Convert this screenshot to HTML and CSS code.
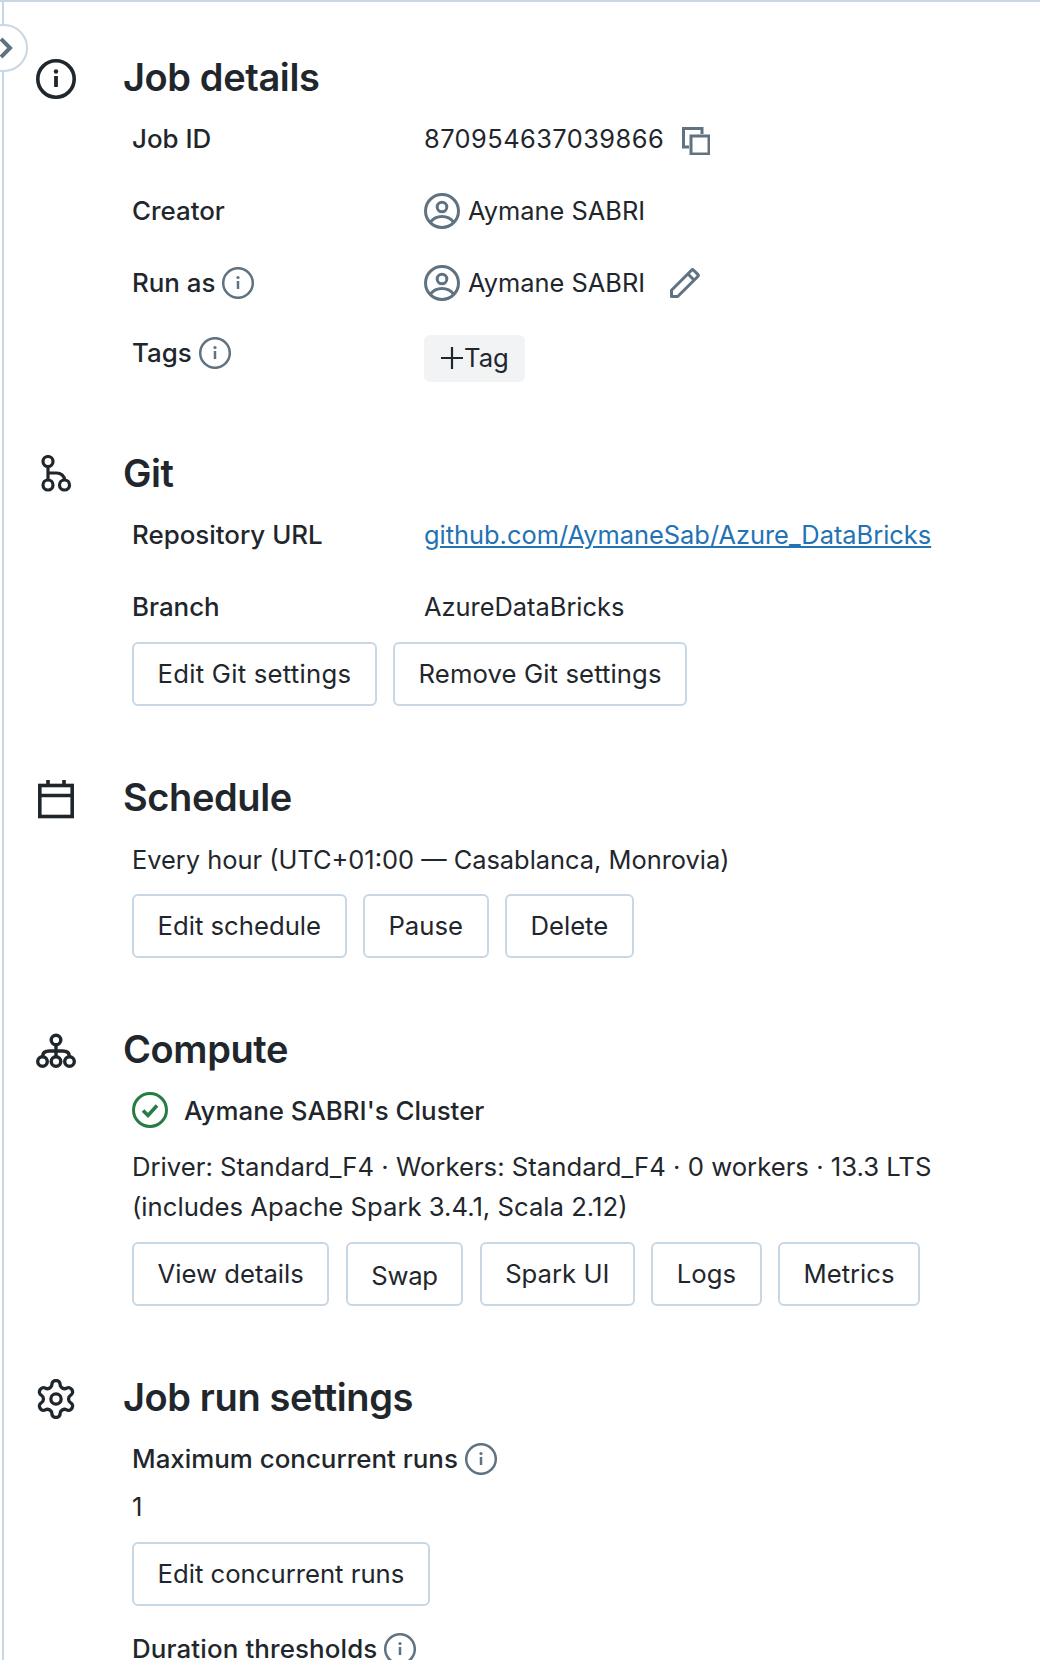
FILE: index.html
```html
<!DOCTYPE html>
<html lang="en">
<head>
  <meta charset="UTF-8">
  <title>Job details</title>
  <link rel="stylesheet" href="styles.css">
</head>
<body>

  <div class="panel">

    <button class="toggle" aria-label="Expand">
      <svg width="14" height="22" viewBox="0 0 14 22"><path d="M1 2l9 9-9 9" fill="none" stroke="#5f7281" stroke-width="4"/></svg>
    </button>

    <section class="section section-first">
      <div class="section-head">
        <svg class="head-icon" width="40" height="40" viewBox="0 0 40 40"><circle cx="20" cy="20" r="18.2" fill="none" stroke="#1f272d" stroke-width="3.6"/><circle cx="20" cy="12.5" r="2.2" fill="#1f272d"/><path d="M20 17v11" stroke="#1f272d" stroke-width="3.8"/></svg>
        <h2>Job details</h2>
      </div>
      <div class="row">
        <div class="label">Job ID</div>
        <div class="value"><span class="job-id">870954637039866</span>
          <svg class="copy-icon" width="28" height="28" viewBox="0 0 28 28"><path d="M7 20H1.500V1.500H20V7" fill="none" stroke="#5f7281" stroke-width="3"/><rect x="9" y="9" width="18" height="18" fill="none" stroke="#5f7281" stroke-width="3"/></svg>
        </div>
      </div>
      <div class="row">
        <div class="label">Creator</div>
        <div class="value">
          <svg class="user-icon" width="36" height="36" viewBox="0 0 36 36"><circle cx="18" cy="18" r="16.500" fill="none" stroke="#5f7281" stroke-width="3"/><circle cx="18" cy="14" r="4.800" fill="none" stroke="#5f7281" stroke-width="3"/><path d="M6.500 29C9.500 25 13.500 23.500 18 23.500s8.500 1.500 11.500 5.500" fill="none" stroke="#5f7281" stroke-width="3"/></svg>
          Aymane SABRI
        </div>
      </div>
      <div class="row">
        <div class="label">Run as
          <svg class="info-icon" width="32" height="32" viewBox="0 0 32 32"><circle cx="16" cy="16" r="14.800" fill="none" stroke="#5f7281" stroke-width="2.500"/><circle cx="16" cy="10.500" r="1.600" fill="#5f7281"/><path d="M16 14v8" stroke="#5f7281" stroke-width="2.500"/></svg>
        </div>
        <div class="value">
          <svg class="user-icon" width="36" height="36" viewBox="0 0 36 36"><circle cx="18" cy="18" r="16.500" fill="none" stroke="#5f7281" stroke-width="3"/><circle cx="18" cy="14" r="4.800" fill="none" stroke="#5f7281" stroke-width="3"/><path d="M6.500 29C9.500 25 13.500 23.500 18 23.500s8.500 1.500 11.500 5.500" fill="none" stroke="#5f7281" stroke-width="3"/></svg>
          Aymane SABRI
          <svg class="pencil-icon" width="30" height="30" viewBox="0 0 30 30"><path d="M1.500 28.500v-6.200L21.500 2.200a1.500 1.500 0 0 1 2.100 0l4.200 4.200a1.500 1.500 0 0 1 0 2.100L7.700 28.500z M18 6l6 6" fill="none" stroke="#5f7281" stroke-width="3" stroke-linejoin="round"/></svg>
        </div>
      </div>
      <div class="row row-tags">
        <div class="label label-tags">Tags
          <svg class="info-icon" width="32" height="32" viewBox="0 0 32 32"><circle cx="16" cy="16" r="14.800" fill="none" stroke="#5f7281" stroke-width="2.500"/><circle cx="16" cy="10.500" r="1.600" fill="#5f7281"/><path d="M16 14v8" stroke="#5f7281" stroke-width="2.500"/></svg>
        </div>
        <div class="value">
          <button class="tag-btn">
            <svg width="22" height="22" viewBox="0 0 22 22"><path d="M11 0v22M0 11h22" stroke="#1f272d" stroke-width="2.200"/></svg>
            Tag
          </button>
        </div>
      </div>
    </section>

    <section class="section section-git">
      <div class="section-head">
        <svg class="head-icon" width="40" height="40" viewBox="0 0 40 40"><g fill="none" stroke="#1f272d" stroke-width="3.200"><circle cx="12" cy="6.500" r="5"/><circle cx="12" cy="30" r="5"/><circle cx="28.500" cy="30" r="5"/><path d="M12 11.500V25M12 18h8.500c4.500 0 8 3 8 7"/></g></svg>
        <h2>Git</h2>
      </div>
      <div class="row">
        <div class="label">Repository URL</div>
        <div class="value"><a href="#">github.com/AymaneSab/Azure_DataBricks</a></div>
      </div>
      <div class="row">
        <div class="label">Branch</div>
        <div class="value">AzureDataBricks</div>
      </div>
      <div class="actions actions-git">
        <button class="btn btn-edit-git">Edit Git settings</button>
        <button class="btn btn-remove-git">Remove Git settings</button>
      </div>
    </section>

    <section class="section">
      <div class="section-head">
        <svg class="head-icon" width="40" height="40" viewBox="0 0 40 40"><g fill="none" stroke="#1f272d" stroke-width="3.600"><rect x="3.800" y="6.500" width="32.400" height="31"/><path d="M3.800 16.500h32.400M12 1v6M28 1v6"/></g></svg>
        <h2>Schedule</h2>
      </div>
      <div class="row row-wide">
        <div class="value">Every hour (UTC+01:00 — Casablanca, Monrovia)</div>
      </div>
      <div class="actions">
        <button class="btn">Edit schedule</button>
        <button class="btn">Pause</button>
        <button class="btn">Delete</button>
      </div>
    </section>

    <section class="section">
      <div class="section-head">
        <svg class="head-icon" width="40" height="40" viewBox="0 0 40 40"><g fill="none" stroke="#1f272d" stroke-width="3.400"><circle cx="20" cy="9" r="4.800"/><circle cx="6.500" cy="30.500" r="4.800"/><circle cx="20" cy="30.500" r="4.800"/><circle cx="33.500" cy="30.500" r="4.800"/><path d="M20 13.800v12M6.500 25.700c0-4 3-5.700 7-5.700h13c4 0 7 1.700 7 5.700"/></g></svg>
        <h2>Compute</h2>
      </div>
      <div class="cluster">
        <svg class="status-icon" width="36" height="36" viewBox="0 0 36 36"><circle cx="18" cy="18" r="16.500" fill="none" stroke="#277c43" stroke-width="3"/><path d="M11 18.500l5 5 9-10" fill="none" stroke="#277c43" stroke-width="3.600"/></svg>
        <span class="label">Aymane SABRI's Cluster</span>
      </div>
      <p class="summary">Driver: Standard_F4 · Workers: Standard_F4 · 0 workers · 13.3 LTS (includes Apache Spark 3.4.1, Scala 2.12)</p>
      <div class="actions">
        <button class="btn">View details</button>
        <button class="btn btn-swap">Swap</button>
        <button class="btn">Spark UI</button>
        <button class="btn">Logs</button>
        <button class="btn">Metrics</button>
      </div>
    </section>

    <section class="section">
      <div class="section-head">
        <svg class="head-icon" width="40" height="40" viewBox="2 2 20 20"><g fill="none" stroke="#1f272d" stroke-width="1.800" transform="translate(12 12) scale(.92) translate(-12 -12)"><path d="M12.220 2h-.44a2 2 0 0 0-2 2v.18a2 2 0 0 1-1 1.730l-.43.25a2 2 0 0 1-2 0l-.15-.08a2 2 0 0 0-2.730.73l-.22.38a2 2 0 0 0 .73 2.730l.15.1a2 2 0 0 1 1 1.720v.51a2 2 0 0 1-1 1.740l-.15.09a2 2 0 0 0-.73 2.730l.22.38a2 2 0 0 0 2.730.73l.15-.08a2 2 0 0 1 2 0l.43.25a2 2 0 0 1 1 1.730V20a2 2 0 0 0 2 2h.44a2 2 0 0 0 2-2v-.18a2 2 0 0 1 1-1.730l.43-.25a2 2 0 0 1 2 0l.15.08a2 2 0 0 0 2.730-.73l.22-.39a2 2 0 0 0-.73-2.730l-.15-.08a2 2 0 0 1-1-1.740v-.5a2 2 0 0 1 1-1.740l.15-.09a2 2 0 0 0 .73-2.730l-.22-.38a2 2 0 0 0-2.730-.73l-.15.08a2 2 0 0 1-2 0l-.43-.25a2 2 0 0 1-1-1.730V4a2 2 0 0 0-2-2z"/><circle cx="12" cy="12" r="2.800"/></g></svg>
        <h2>Job run settings</h2>
      </div>
      <div class="stack-label">
        <span class="label">Maximum concurrent runs</span>
        <svg class="info-icon" width="32" height="32" viewBox="0 0 32 32"><circle cx="16" cy="16" r="14.800" fill="none" stroke="#5f7281" stroke-width="2.500"/><circle cx="16" cy="10.500" r="1.600" fill="#5f7281"/><path d="M16 14v8" stroke="#5f7281" stroke-width="2.500"/></svg>
      </div>
      <div class="stack-value">1</div>
      <div class="actions actions-stack">
        <button class="btn">Edit concurrent runs</button>
      </div>
      <div class="stack-label stack-label-next">
        <span class="label">Duration thresholds</span>
        <svg class="info-icon" width="32" height="32" viewBox="0 0 32 32"><circle cx="16" cy="16" r="14.800" fill="none" stroke="#5f7281" stroke-width="2.500"/><circle cx="16" cy="10.500" r="1.600" fill="#5f7281"/><path d="M16 14v8" stroke="#5f7281" stroke-width="2.500"/></svg>
      </div>
    </section>

  </div>

</body>
</html>
```

FILE: styles.css
```css
html, body {
  margin: 0;
  padding: 0;
  height: 100%;
}

body {
  font-family: Inter, "Noto Sans", sans-serif;
  font-size: 25.7px;
  line-height: 40px;
  color: #1f272d;
  background-color: #fff;
  border-top: 2px solid #c8d7e5;
  overflow: hidden;
  box-sizing: border-box;
}

.panel {
  position: relative;
  margin-left: 2px;
  height: 100%;
  border-left: 2px solid #c8d7e5;
  padding-left: 32px;
}

.toggle {
  position: absolute;
  left: -24px;
  top: 22px;
  width: 48px;
  height: 48px;
  padding: 0 0 0 18px;
  border: 2px solid #c8d7e5;
  border-radius: 50%;
  background-color: #fff;
  display: flex;
  align-items: center;
  overflow: hidden;
}

.section {
  margin-top: 67px;
}

.section-first {
  margin-top: 0;
  padding-top: 51px;
}

.section-git {
  margin-top: 60px;
}

.section-head {
  display: flex;
  align-items: center;
  height: 48px;
}

.head-icon {
  flex-shrink: 0;
  margin: 4px 47px 0 0;
}

h2 {
  margin: 0;
  font-size: 38px;
  line-height: 48px;
  font-weight: 560;
  letter-spacing: -0.4px;
}

.row {
  display: grid;
  grid-template-columns: 292px 1fr;
  align-items: center;
  box-sizing: border-box;
  height: 72px;
  padding-top: 4px;
  margin-left: 96px;
}

.row-wide {
  grid-template-columns: 1fr;
  height: 73px;
  padding-top: 4px;
}

.label {
  font-size: 25.9px;
  font-weight: 500;
  display: flex;
  align-items: center;
  gap: 7px;
}

.label-tags {
  align-self: start;
  margin-top: 12px;
}

.value {
  display: flex;
  align-items: center;
  font-size: 25.4px;
}

.value a {
  color: #2272b4;
}

.job-id {
  letter-spacing: 0.45px;
}

.copy-icon {
  margin-left: 18px;
  margin-top: 4px;
}

.user-icon {
  margin-right: 8px;
}

.pencil-icon {
  margin-left: 25px;
}

.tag-btn {
  display: flex;
  align-items: center;
  gap: 1px;
  height: 47px;
  padding: 0 16px 0 17px;
  margin-top: 6px;
  font: inherit;
  font-size: 25.7px;
  color: inherit;
  background-color: #f1f3f5;
  border: none;
  border-radius: 6px;
}

.actions {
  display: flex;
  gap: 16.4px;
  margin-left: 96px;
}

.actions-git {
  margin-top: 1px;
}

.actions-stack {
  margin-top: 11px;
}

.btn {
  height: 64px;
  padding: 0 23.5px;
  font: inherit;
  color: inherit;
  background-color: #fff;
  border: 2px solid #c8d7e5;
  border-radius: 6px;
}

.btn-edit-git {
  letter-spacing: 0.25px;
}

.btn-remove-git {
  letter-spacing: 0.1px;
}

.btn-swap {
  padding-top: 3px;
  letter-spacing: -0.3px;
}

.cluster {
  display: flex;
  align-items: center;
  box-sizing: border-box;
  height: 74px;
  padding-top: 2px;
  margin-left: 96px;
}

.status-icon {
  margin: -2px 16px 0 0;
}

.summary {
  width: 820px;
  margin: 0 0 15px 96px;
}

.stack-label {
  display: flex;
  align-items: center;
  gap: 7px;
  box-sizing: border-box;
  height: 72px;
  padding-top: 4px;
  margin-left: 96px;
}

.stack-value {
  margin: -10px 0 0 96px;
  height: 48px;
  line-height: 48px;
}

.stack-label-next {
  margin-top: 5px;
}

.stack-label-next .label {
  letter-spacing: 0.12px;
}
```
